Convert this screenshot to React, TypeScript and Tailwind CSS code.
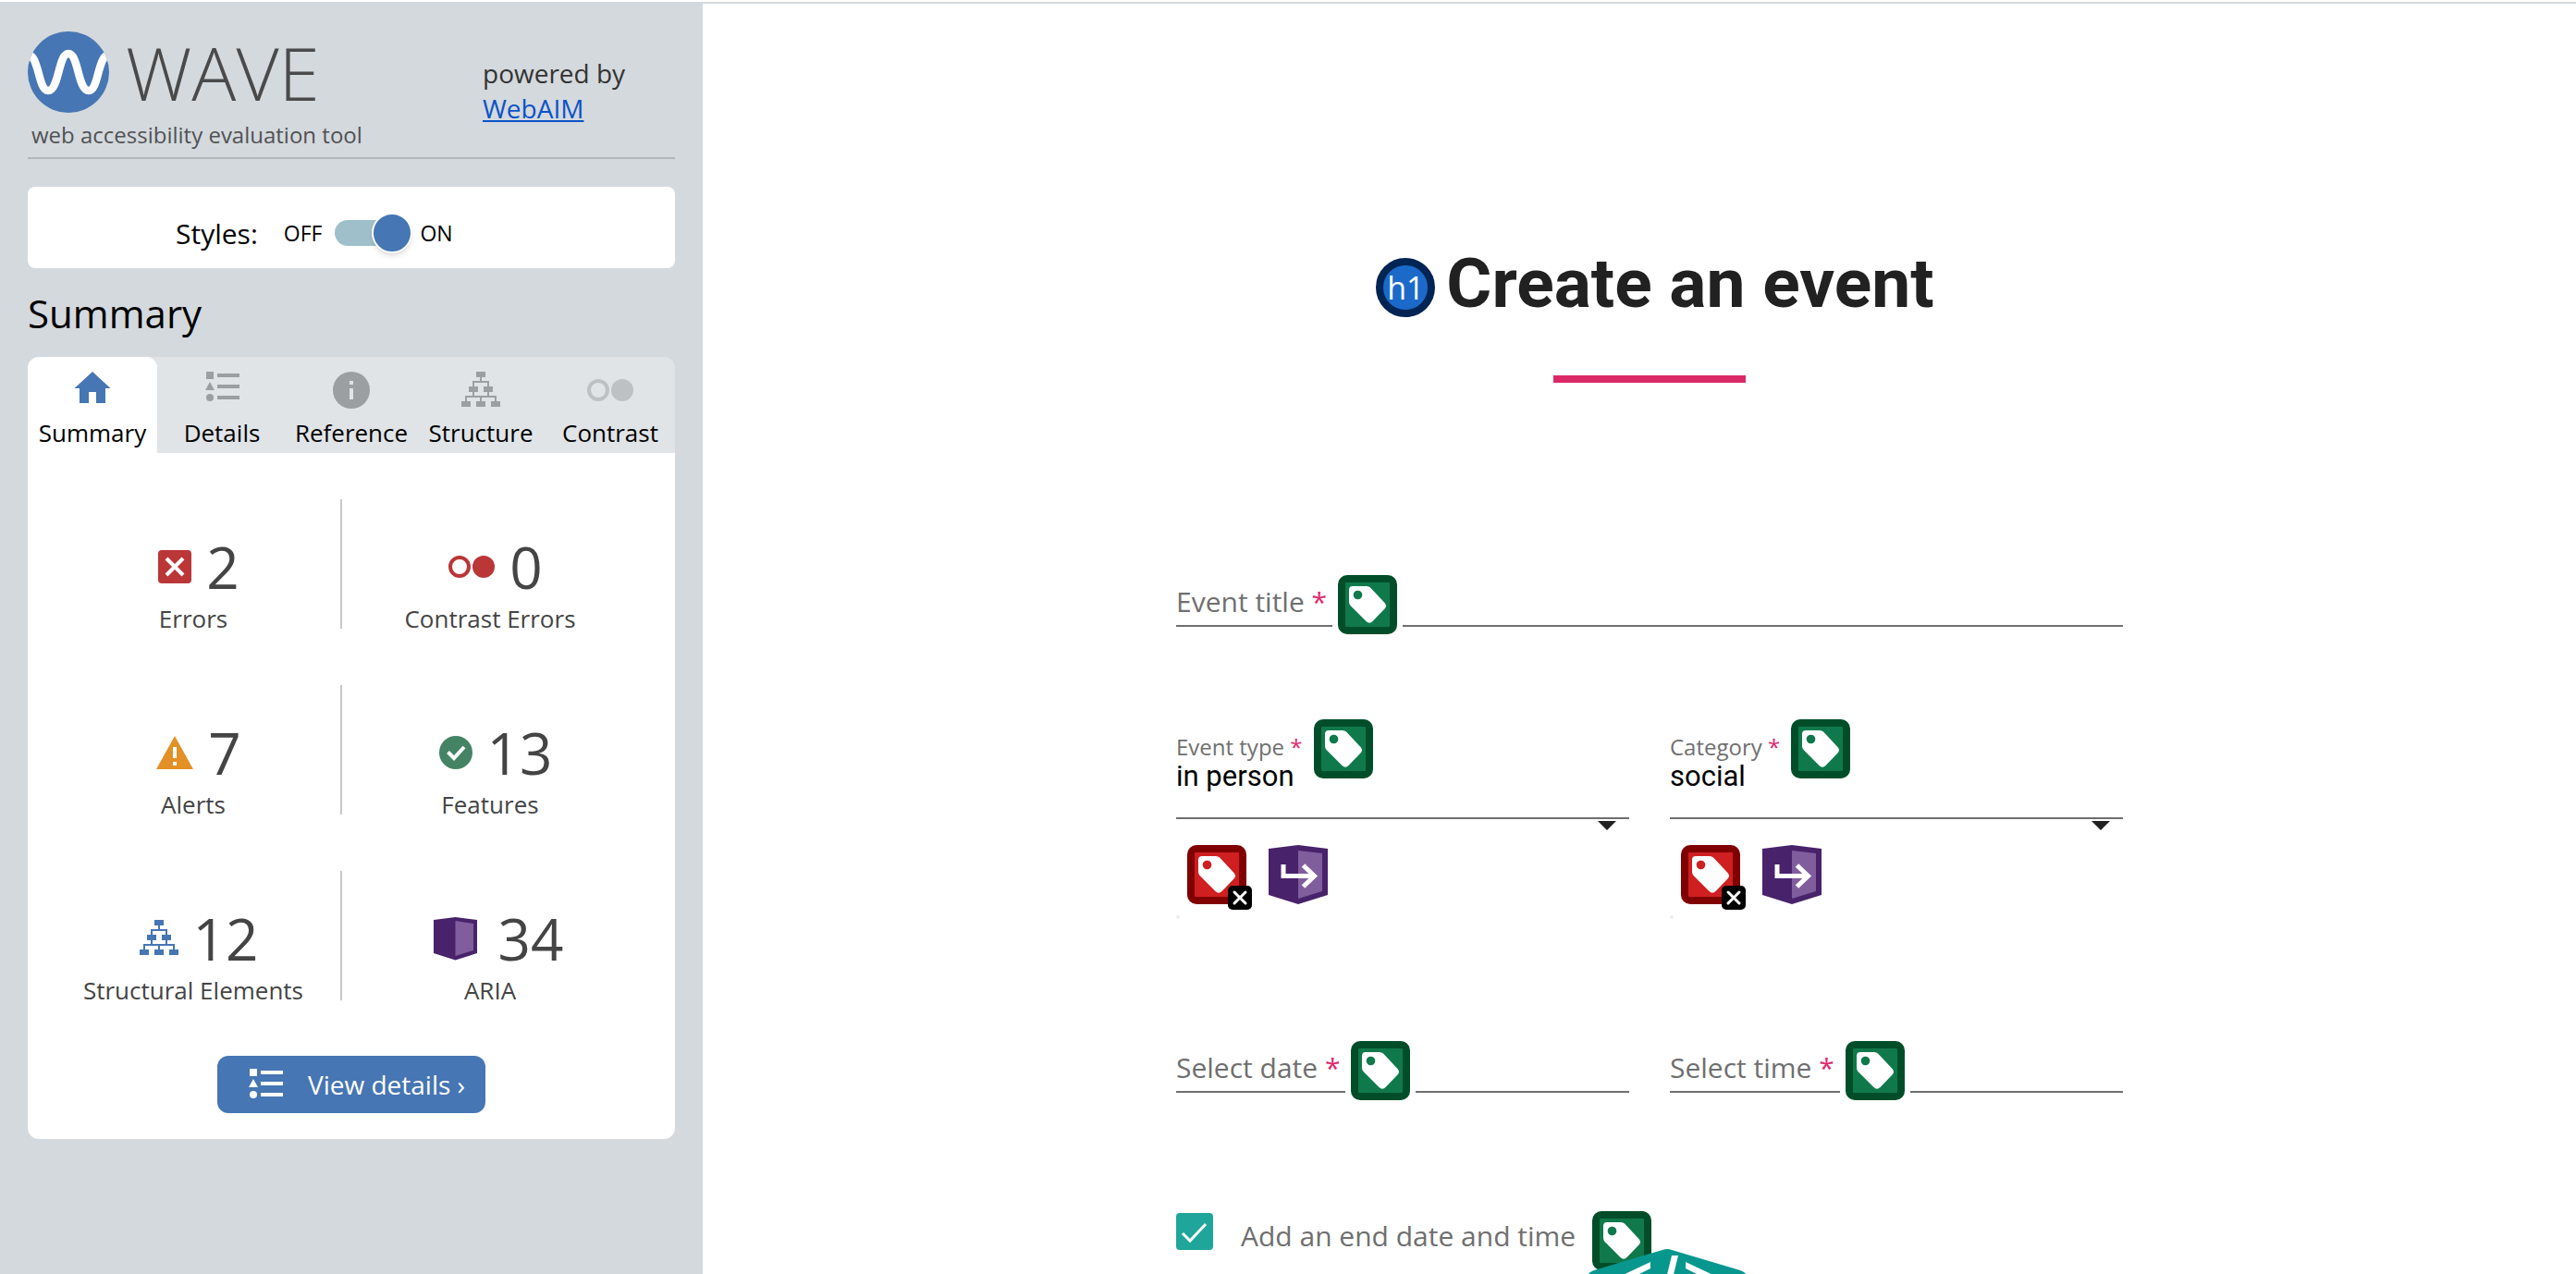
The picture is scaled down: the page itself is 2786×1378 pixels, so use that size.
import React from "react";

function Logo() {
  return (
    <svg viewBox="0 0 88 88" className="size-[88px] shrink-0" aria-hidden="true">
      <defs>
        <clipPath id="logo-disc"><circle cx="44" cy="44" r="44" /></clipPath>
      </defs>
      <circle cx="44" cy="44" r="44" fill="#4676b3" />
      <path d="M-4 26C13 18 10 64 22 64C34 64 33 24 44 24C55 24 54 64 66 64C78 64 75 18 92 26" fill="none" stroke="#fff" strokeWidth="8.500" clipPath="url(#logo-disc)" />
    </svg>
  );
}

function HomeIcon() {
  return (
    <svg viewBox="0 2 40 40" className="size-10" fill="#4676b3" aria-hidden="true">
      <path d="M20 2L39.500 20H34V36H24V24H16V36H6V20H0.500Z" />
    </svg>
  );
}

function ListIcon() {
  return (
    <svg viewBox="0 2 40 40" className="size-10" fill="currentColor" aria-hidden="true">
      <rect x="3" y="2" width="8" height="8" />
      <path d="M7 13L12 22H2Z" />
      <circle cx="7" cy="30" r="4" />
      <rect x="15" y="4" width="24" height="4" />
      <rect x="15" y="16" width="24" height="4" />
      <rect x="15" y="28" width="24" height="4" />
    </svg>
  );
}

function InfoIcon() {
  return (
    <svg viewBox="0 0 40 40" className="size-10" aria-hidden="true">
      <circle cx="20" cy="20" r="20" fill="#9b9fa2" />
      <rect x="18" y="10" width="4" height="4" fill="#e0e4e7" />
      <rect x="18" y="18" width="4" height="12" fill="#e0e4e7" />
    </svg>
  );
}

function TreeIcon() {
  return (
    <svg viewBox="0 1 42 40" className="h-10 w-[42px]" fill="currentColor" aria-hidden="true">
      <rect x="16" y="1" width="10" height="6" />
      <rect x="8" y="17" width="10" height="6" />
      <rect x="24" y="17" width="10" height="6" />
      <rect x="0" y="33" width="10" height="6" />
      <rect x="16" y="33" width="10" height="6" />
      <rect x="32" y="33" width="10" height="6" />
      <path d="M21 6V12M13 18V12H29V18M13 22V28M29 22V28M5 34V28H37V34M21 28V34" fill="none" stroke="currentColor" strokeWidth="2" />
    </svg>
  );
}

function ContrastIcon() {
  return (
    <svg viewBox="0 0 50 24" className="h-6 w-[50px]" aria-hidden="true">
      <circle cx="12" cy="12" r="10" fill="none" stroke="currentColor" strokeWidth="4" />
      <circle cx="38" cy="12" r="12" fill="currentColor" />
    </svg>
  );
}

function ErrorIcon() {
  return (
    <svg viewBox="0 0 36 36" className="size-9" aria-hidden="true">
      <rect width="36" height="36" rx="4" fill="#bb3637" />
      <path d="M9 9L27 27M27 9L9 27" stroke="#fff" strokeWidth="4" />
    </svg>
  );
}

function AlertIcon() {
  return (
    <svg viewBox="0 0 40 36" className="h-9 w-10" aria-hidden="true">
      <path d="M20 0L40 36H0Z" fill="#e39026" />
      <path d="M20 12V24M20 28V32" stroke="#fff" strokeWidth="4" />
    </svg>
  );
}

function FeatureIcon() {
  return (
    <svg viewBox="0 0 36 36" className="size-9" aria-hidden="true">
      <circle cx="18" cy="18" r="18" fill="#448465" />
      <path d="M9.500 17.500L16 24L27 12" fill="none" stroke="#fff" strokeWidth="4" />
    </svg>
  );
}

function AriaIcon() {
  return (
    <svg viewBox="-6 0 60 48" className="h-12 w-[60px]" aria-hidden="true">
      <path d="M0 4L23.500 1L47 4V40L23.500 47.500L0 40Z" fill="#48226b" />
      <path d="M23.500 5L43 8V37L23.500 43Z" fill="#805e9d" />
    </svg>
  );
}

function TagIcon({ red = false }: { red?: boolean }) {
  return (
    <svg viewBox="0 0 64 64" className="size-16 shrink-0" role="img" aria-label={red ? "Missing form label" : "Form label"}>
      <rect width="64" height="64" rx="10" fill={red ? "#800000" : "#004e29"} />
      <rect x="8" y="8" width="48" height="48" rx="1" fill={red ? "#cf1f21" : "#10794b"} />
      <path d="M16 12H31Q33.500 12 35 13.500L50.500 30Q53.500 33.500 50.500 36.500L37.500 50Q34 53.500 30.500 50L13.500 33Q12 31.500 12 29V16Q12 12 16 12Z" fill="#fff" />
      <circle cx="21.500" cy="21.500" r="4.800" fill={red ? "#cf1f21" : "#10794b"} />
    </svg>
  );
}

function MissingLabelIcon() {
  return (
    <div className="relative">
      <TagIcon red />
      <svg viewBox="0 0 26 26" className="absolute -right-1.5 -bottom-1.5 size-[26px]" aria-hidden="true">
        <rect width="26" height="26" rx="5" fill="#000" />
        <path d="M7 7L19 19M19 7L7 19" stroke="#fff" strokeWidth="3" strokeLinecap="round" />
      </svg>
    </div>
  );
}

function AriaArrowIcon() {
  return (
    <svg viewBox="0 0 64 64" className="size-16" role="img" aria-label="ARIA popup">
      <path d="M0 4L32 0L64 4V54L32 64L0 54Z" fill="#48226b" />
      <path d="M32 6L58 9V50L32 58Z" fill="#805e9d" />
      <path d="M16 21V33.500H50M37.500 22L49.500 33.500L37.500 45" fill="none" stroke="#fff" strokeWidth="5" />
    </svg>
  );
}

const tabs = [
  { label: "Summary", icon: <HomeIcon />, active: true },
  { label: "Details", icon: <ListIcon /> },
  { label: "Reference", icon: <InfoIcon /> },
  { label: "Structure", icon: <TreeIcon /> },
  { label: "Contrast", icon: <span className="text-[#bdc1c4]"><ContrastIcon /></span> },
];

const stats = [
  { count: 2, label: "Errors", icon: <ErrorIcon /> },
  { count: 0, label: "Contrast Errors", icon: <span className="text-[#bb3637]"><ContrastIcon /></span> },
  { count: 7, label: "Alerts", icon: <AlertIcon /> },
  { count: 13, label: "Features", icon: <FeatureIcon /> },
  { count: 12, label: "Structural Elements", icon: <span className="text-[#4676b3]"><TreeIcon /></span> },
  { count: 34, label: "ARIA", icon: <AriaIcon /> },
];

function Sidebar() {
  return (
    <aside className="w-[760px] shrink-0 bg-[#d4d9dd] px-[30px] pt-[30px]">
      <header className="flex items-start border-b-2 border-[#b0b6bb]">
        <div className="w-[492px]">
          <div className="flex items-center gap-[18px]">
            <Logo />
            <span className="text-[80px] leading-[88px] font-light text-[#4a4a4a]">WAVE</span>
          </div>
          <p className="pl-1 text-[24px] leading-[48px] text-[#505254]">web accessibility evaluation tool</p>
        </div>
        <div className="pt-[26px] text-[28px] leading-[38px] text-[#333]">
          <p>powered by</p>
          <a href="#webaim" className="text-[#0a53c8] underline">WebAIM</a>
        </div>
      </header>

      <section className="mt-[30px] flex h-[88px] items-center rounded-lg bg-white pt-3 pl-40 text-black">
        <span id="styles-label" className="text-[30px]">Styles:</span>
        <label className="ml-7 flex items-center text-[23px]">
          OFF
          <input type="checkbox" role="switch" aria-labelledby="styles-label" defaultChecked className="peer sr-only" />
          <span className="ml-3.5 flex h-7 w-[84px] items-center justify-end rounded-full bg-[linear-gradient(90deg,#9fc0ca_60px,transparent_60px)]">
            <span className="size-11 shrink-0 rounded-full border-2 border-white bg-[#4676b3] shadow-md" />
          </span>
          <span className="ml-2">ON</span>
        </label>
      </section>

      <h2 className="mt-5 text-[42px] leading-[58px] text-black">Summary</h2>

      <div role="tablist" className="mt-[18px] grid grid-cols-5 rounded-t-xl bg-[#e0e4e7]">
        {tabs.map((t) => (
          <button
            key={t.label}
            role="tab"
            type="button"
            aria-selected={!!t.active}
            className={
              t.active
                ? "flex h-[104px] flex-col items-center rounded-t-xl bg-white pt-3 text-[26px] text-black"
                : "flex h-[104px] flex-col items-center pt-3 text-[26px] text-black"
            }
          >
            <span className="flex h-12 items-center text-[#9b9fa2]">{t.icon}</span>
            <span className="leading-[44px]">{t.label}</span>
          </button>
        ))}
      </div>

      <section className="flex flex-col items-center rounded-b-xl bg-white pt-[50px] pb-7">
        <ul className="mr-5 grid w-[640px] grid-cols-2 gap-y-[61px]">
          {stats.map((s, i) => (
            <li
              key={s.label}
              className={
                i % 2 === 0
                  ? "flex h-[140px] flex-col items-center justify-end border-r-2 border-[#c8c8c8] text-[#444]"
                  : "flex h-[140px] flex-col items-center justify-end text-[#444]"
              }
            >
              <div className="flex items-center gap-4 pl-3">
                {s.icon}
                <span className="text-[62px] leading-[70px]">{s.count}</span>
              </div>
              <span className="mt-2.5 text-[26px] leading-[22px]">{s.label}</span>
            </li>
          ))}
        </ul>
        <button type="button" className="mt-[60px] flex h-[62px] items-center gap-[26px] rounded-xl bg-[#4676b3] pr-[22px] pl-8 text-[28px] text-white">
          <span className="pt-1.5"><ListIcon /></span>
          View details ›
        </button>
      </section>
    </aside>
  );
}

function TextField({ id, label }: { id: string; label: string }) {
  return (
    <div className="flex h-14 items-end border-b-2 border-[#6f6f6f]">
      <label htmlFor={id} className="text-[30px] leading-[50px] text-[#6f6f6f]">
        {label} <span className="text-[#e0286b]">*</span>
      </label>
      <span className="-mb-2.5 ml-1.5 bg-white px-1.5"><TagIcon /></span>
      <input id={id} type="text" className="h-12 min-w-0 flex-1 bg-transparent text-[30px] outline-none" />
    </div>
  );
}

function SelectField({ id, label, value }: { id: string; label: string; value: string }) {
  return (
    <div>
      <div className="flex h-[108px] flex-col border-b-2 border-[#6f6f6f]">
        <div className="flex h-[38px] items-start gap-3">
          <label htmlFor={id} className="pt-3 text-[24px] leading-9 text-[#6f6f6f]">
            {label} <span className="text-[#e0286b]">*</span>
          </label>
          <TagIcon />
        </div>
        <select id={id} defaultValue={value} className="h-12 w-full appearance-none bg-transparent font-[Roboto,sans-serif] text-[31px] text-black outline-none">
          <option>{value}</option>
        </select>
      </div>
      <div className="flex justify-end pt-0.5 pr-3.5">
        <svg viewBox="0 0 20 10" className="h-2.5 w-5" fill="#212121" aria-hidden="true"><path d="M0 0H20L10 10Z" /></svg>
      </div>
      <div className="flex gap-6 pt-4 pl-3">
        <MissingLabelIcon />
        <AriaArrowIcon />
      </div>
      <div className="mt-3 size-1 rounded-full bg-[#eeeeee]" />
    </div>
  );
}

function CodeTab() {
  return (
    <div className="absolute inset-x-0 bottom-0 flex justify-center pl-[60px]">
      <button type="button" aria-label="Code" className="block">
        <svg viewBox="0 0 180 27" className="h-[27px] w-[180px] overflow-visible drop-shadow-xl" aria-hidden="true">
          <path d="M3 30Q5 25 11 23L85 1Q90 -1 95 1L169 23Q175 25 177 30Z" fill="#07978f" />
          <path d="M95 7H102L95 36H88Z" fill="#fff" />
          <path d="M72 14V21L54 30H38Z" fill="#fff" />
          <path d="M110 14V21L128 30H144Z" fill="#fff" />
        </svg>
      </button>
    </div>
  );
}

function Main() {
  return (
    <main className="relative flex min-w-0 flex-1 flex-col items-center pl-[22px] pt-[256px]">
      <div className="flex items-center gap-3 pl-3">
        <span className="mt-2.5 flex size-16 items-center justify-center rounded-full border-8 border-[#002453] bg-[#1b6ac9] text-[34px] leading-none text-white">h1</span>
        <h1 className="font-[Roboto,sans-serif] text-[75px] leading-[92px] font-bold text-[#212121]">Create an event</h1>
      </div>
      <div className="mt-[54px] h-2 w-52 bg-[#db2866]" />

      <form className="mt-[208px] w-full max-w-[1024px]">
        <TextField id="title" label="Event title" />
        <div className="mt-[100px] grid grid-cols-2 gap-x-11">
          <SelectField id="type" label="Event type" value="in person" />
          <SelectField id="category" label="Category" value="social" />
        </div>
        <div className="mt-[132px] grid grid-cols-2 gap-x-11">
          <TextField id="date" label="Select date" />
          <TextField id="time" label="Select time" />
        </div>
        <div className="mt-32 flex h-16 items-start">
          <span className="relative mt-0.5 size-10">
            <input id="end" type="checkbox" defaultChecked className="size-10 appearance-none rounded bg-[#20a59b]" />
            <svg viewBox="0 0 40 40" className="pointer-events-none absolute inset-0 size-10" aria-hidden="true">
              <path d="M7 22L15 30L32 12" fill="none" stroke="#fff" strokeWidth="3" />
            </svg>
          </span>
          <label htmlFor="end" className="ml-[30px] pt-1 text-[30px] leading-[46px] text-[#6f6f6f]">Add an end date and time</label>
          <span className="ml-[18px]"><TagIcon /></span>
        </div>
      </form>
      <CodeTab />
    </main>
  );
}

export default function App() {
  return (
    <div className="flex h-screen min-h-[600px] flex-col overflow-hidden bg-white font-['Open_Sans','Noto_Sans',sans-serif]">
      <div className="mt-0.5 h-0.5 shrink-0 bg-[#d4d9dd]" />
      <div className="flex flex-1">
        <Sidebar />
        <Main />
      </div>
    </div>
  );
}
